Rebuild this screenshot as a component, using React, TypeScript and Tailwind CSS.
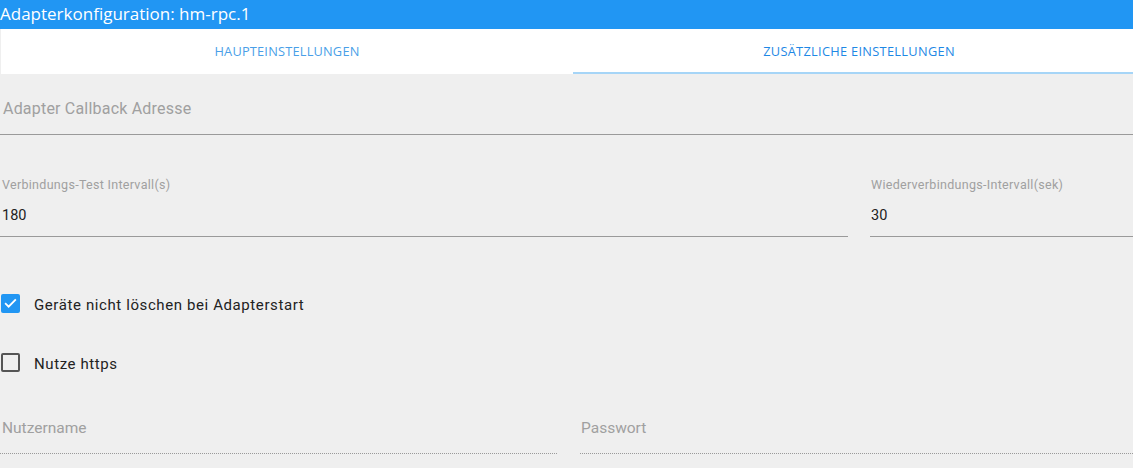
import React from "react";

export default function App() {
  return (
    <div className="w-[1133px] h-[468px] overflow-hidden bg-[#efefef]" style={{ fontFamily: "Roboto, 'Noto Sans', sans-serif" }}>
      <div className="h-[29px] bg-[#2196f3] text-white text-[17px] leading-[28px] pl-0" style={{ fontFamily: "'Open Sans', 'Noto Sans', sans-serif" }}>
        Adapterkonfiguration: hm-rpc.1
      </div>
      <div className="flex h-[45px] pl-[1px]">
        <div className="flex-1 bg-white flex items-center justify-center text-[12.8px] tracking-[0.2px] text-[#4a9fe8] pt-[1px]" style={{ fontFamily: "'Open Sans', 'Noto Sans', sans-serif" }}>
          HAUPTEINSTELLUNGEN
        </div>
        <div className="w-[560px] bg-white flex flex-col">
          <div className="flex-1 flex items-center justify-center text-[12.8px] tracking-[0.3px] text-[#1e88e5] pl-[12px] pt-[3px]" style={{ fontFamily: "'Open Sans', 'Noto Sans', sans-serif" }}>
            ZUSÄTZLICHE EINSTELLUNGEN
          </div>
          <div className="h-[2px] bg-[#a6d5f7]" />
        </div>
      </div>
      <div className="pt-[24px]">
        <div className="text-[16px] tracking-[0.2px] text-[#a0a0a0] pl-[3px] leading-[22px]">Adapter Callback Adresse</div>
        <div className="mt-[14px] h-[1px] bg-[#9a9a9a]" />
      </div>
      <div className="flex gap-[22px] mt-[42px]">
        <div className="w-[848px]">
          <div className="text-[12.5px] tracking-[0.3px] text-[#a0a0a0] pl-[2px] leading-[16px]">Verbindungs-Test Intervall(s)</div>
          <div className="text-[14.5px] text-[#222] pl-[2px] mt-[14px] leading-[18px]">180</div>
          <div className="mt-[11px] h-[1px] bg-[#9a9a9a]" />
        </div>
        <div className="flex-1">
          <div className="text-[12.5px] tracking-[0.3px] text-[#a0a0a0] pl-[1px] leading-[16px]">Wiederverbindungs-Intervall(sek)</div>
          <div className="text-[14.5px] text-[#222] pl-[1px] mt-[14px] leading-[18px]">30</div>
          <div className="mt-[11px] h-[1px] bg-[#9a9a9a]" />
        </div>
      </div>
      <div className="mt-[57px] flex items-center h-[19px]">
        <div className="w-[19px] h-[19px] ml-[1px] rounded-[2px] bg-[#2196f3] flex items-center justify-center">
          <svg width="15" height="15" viewBox="0 0 24 24" fill="none" stroke="white" strokeWidth="3" strokeLinecap="square">
            <path d="M4.5 12.5l4.5 4.5L19.5 6.5" />
          </svg>
        </div>
        <div className="ml-[14px] text-[15px] text-[#222] tracking-[0.6px] pt-[3px]">Geräte nicht löschen bei Adapterstart</div>
      </div>
      <div className="mt-[40px] flex items-center h-[19px]">
        <div className="w-[19px] h-[19px] ml-[1px] rounded-[2px] border-2 border-[#555]" />
        <div className="ml-[14px] text-[15px] text-[#222] tracking-[0.6px] pt-[3px]">Nutze https</div>
      </div>
      <div className="flex gap-[23px] mt-[45px]">
        <div className="w-[557px]">
          <div className="text-[15.5px] text-[#a0a0a0] pl-[2px] leading-[22px]">Nutzername</div>
          <div className="mt-[14px] border-b border-dotted border-[#9a9a9a]" />
        </div>
        <div className="flex-1">
          <div className="text-[15.5px] text-[#a0a0a0] pl-[1px] leading-[22px]">Passwort</div>
          <div className="mt-[14px] border-b border-dotted border-[#9a9a9a]" />
        </div>
      </div>
    </div>
  );
}
